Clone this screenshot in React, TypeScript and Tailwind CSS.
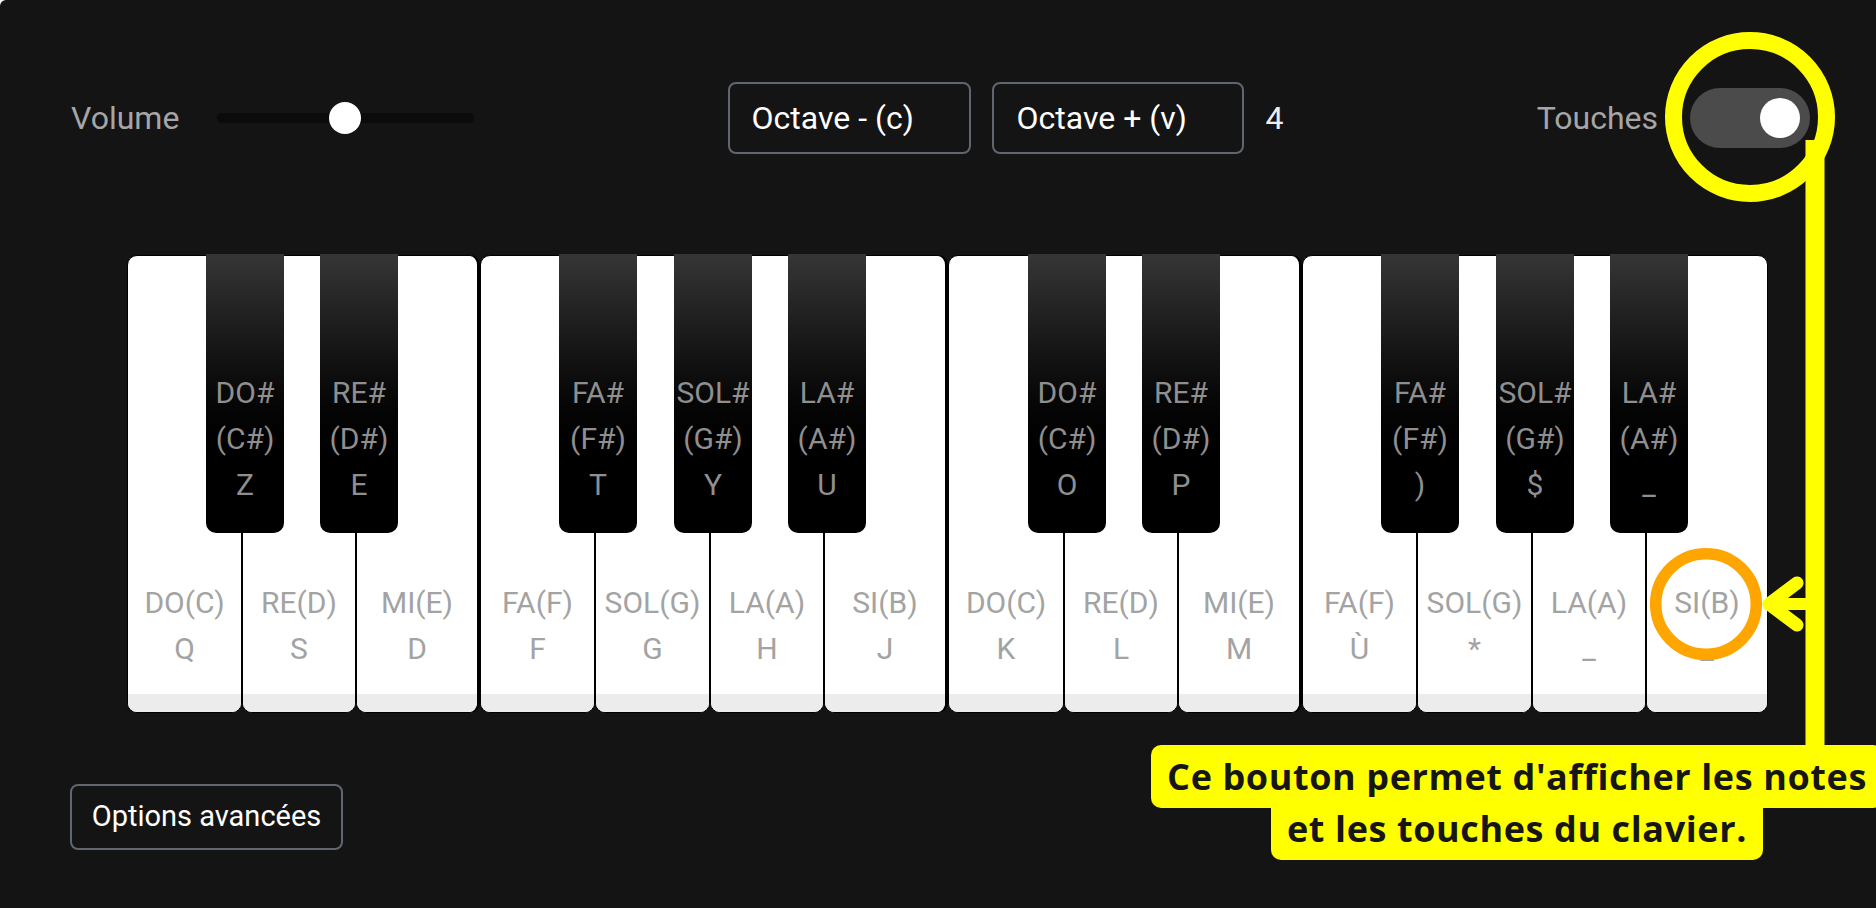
import React from "react";

type Black = { n: string; s: string; k: string };
type White = { w: string; n: string; k: string; gap?: boolean; black?: Black };

const whites: White[] = [
  { w: "w-[115px]", n: "DO(C)", k: "Q", black: { n: "DO#", s: "(C#)", k: "Z" } },
  { w: "w-[114px]", n: "RE(D)", k: "S", black: { n: "RE#", s: "(D#)", k: "E" } },
  { w: "w-[124px]", n: "MI(E)", k: "D", gap: true },
  { w: "w-[115px]", n: "FA(F)", k: "F", black: { n: "FA#", s: "(F#)", k: "T" } },
  { w: "w-[115px]", n: "SOL(G)", k: "G", black: { n: "SOL#", s: "(G#)", k: "Y" } },
  { w: "w-[114px]", n: "LA(A)", k: "H", black: { n: "LA#", s: "(A#)", k: "U" } },
  { w: "w-[124px]", n: "SI(B)", k: "J", gap: true },
  { w: "w-[116px]", n: "DO(C)", k: "K", black: { n: "DO#", s: "(C#)", k: "O" } },
  { w: "w-[114px]", n: "RE(D)", k: "L", black: { n: "RE#", s: "(D#)", k: "P" } },
  { w: "w-[124px]", n: "MI(E)", k: "M", gap: true },
  { w: "w-[115px]", n: "FA(F)", k: "Ù", black: { n: "FA#", s: "(F#)", k: ")" } },
  { w: "w-[115px]", n: "SOL(G)", k: "*", black: { n: "SOL#", s: "(G#)", k: "$" } },
  { w: "w-[114px]", n: "LA(A)", k: "_", black: { n: "LA#", s: "(A#)", k: "_" } },
  { w: "w-[122px]", n: "SI(B)", k: "_" },
];

function WhiteKey({ data }: { data: White }) {
  return (
    <div
      className={`relative shrink-0 ${data.w} h-[458px] bg-white border border-black ${
        data.gap ? "border-r-[3px]" : ""
      } rounded-[10px] flex flex-col justify-end`}
    >
      <div className="flex flex-col items-center pb-[22px] text-[30px] leading-[46px] text-[#a3a3a3] whitespace-nowrap">
        <div>{data.n}</div>
        <div>{data.k}</div>
      </div>
      <div className="h-[18px] bg-[#ececec] rounded-b-[9px]" />
      {data.black && (
        <div className="absolute top-[-2px] right-[-43px] w-[78px] h-[279px] z-10 rounded-b-[10px] bg-linear-to-b from-[#363636] to-black to-[85%] flex flex-col justify-end items-center pb-[25px] text-[30px] leading-[46px] text-[#8f8f8f] whitespace-nowrap">
          <div>{data.black.n}</div>
          <div>{data.black.s}</div>
          <div>{data.black.k}</div>
        </div>
      )}
    </div>
  );
}

export default function App() {
  return (
    <div className="relative w-[1876px] h-[908px] overflow-hidden bg-white font-['Roboto',sans-serif]">
      <div className="w-full h-full bg-[#141414] rounded-tl-[6px] flex flex-col">
        {/* top controls */}
        <div className="mt-[82px] h-[72px] flex items-center justify-between pl-[71px] pr-[66px]">
          <div className="flex items-center gap-[38px]">
            <span className="text-[32px] text-[#a6a6a6]">Volume</span>
            <div className="relative w-[257px] h-[10px] rounded-full bg-[#0b0b0b]">
              <div className="absolute left-[112px] top-[-11px] w-8 h-8 rounded-full bg-white" />
            </div>
          </div>
          <div className="flex items-center">
            <button className="w-[243px] h-[72px] border-2 border-[#5f6670] rounded-[8px] pl-[22px] text-left text-[32px] text-white">
              Octave - (c)
            </button>
            <button className="ml-[21px] w-[252px] h-[72px] border-2 border-[#5f6670] rounded-[8px] pl-[23px] text-left text-[32px] text-white">
              Octave + (v)
            </button>
            <span className="ml-[22px] text-[32px] text-[#eeeeee]">4</span>
          </div>
          <div className="flex items-center gap-[32px]">
            <span className="text-[32px] text-[#a6a6a6]">Touches</span>
            <div className="w-[120px] h-[60px] rounded-full bg-[#4b4b4b] flex items-center justify-end pr-[10px]">
              <div className="w-10 h-10 rounded-full bg-white" />
            </div>
          </div>
        </div>

        {/* piano */}
        <div className="mt-[101px] ml-[127px] flex">
          {whites.map((w, i) => (
            <WhiteKey key={i} data={w} />
          ))}
        </div>

        {/* options */}
        <div className="mt-[71px] ml-[70px]">
          <button className="w-[273px] h-[66px] border-2 border-[#5f6670] rounded-[8px] text-[29px] text-white whitespace-nowrap">
            Options avancées
          </button>
        </div>
      </div>

      {/* annotations */}
      <svg
        className="absolute left-0 top-0 z-20 pointer-events-none"
        width="1876"
        height="908"
        viewBox="0 0 1876 908"
      >
        <circle cx="1750" cy="117" r="76.5" fill="none" stroke="#ffff00" strokeWidth="17" />
        <line x1="1815" y1="140" x2="1815" y2="760" stroke="#ffff00" strokeWidth="19" />
        <line x1="1815" y1="604" x2="1772" y2="604" stroke="#ffff00" strokeWidth="12" />
        <polyline
          points="1797,583 1769,604 1797,625"
          fill="none"
          stroke="#ffff00"
          strokeWidth="13"
          strokeLinecap="round"
          strokeLinejoin="round"
        />
        <circle cx="1706" cy="604" r="50.3" fill="none" stroke="#ffa500" strokeWidth="11.5" />
      </svg>

      <div className="absolute left-[1117px] top-[751px] w-[800px] z-30 text-center font-['Open_Sans',sans-serif] font-bold text-[36px] tracking-[0.6px] leading-[52px] text-[#161616]">
        <span className="bg-[#ffff00] px-4 py-[7px] rounded-[10px] [box-decoration-break:clone] [-webkit-box-decoration-break:clone]">
          Ce bouton permet d'afficher les notes
          <br />
          et les touches du clavier.
        </span>
      </div>
    </div>
  );
}
